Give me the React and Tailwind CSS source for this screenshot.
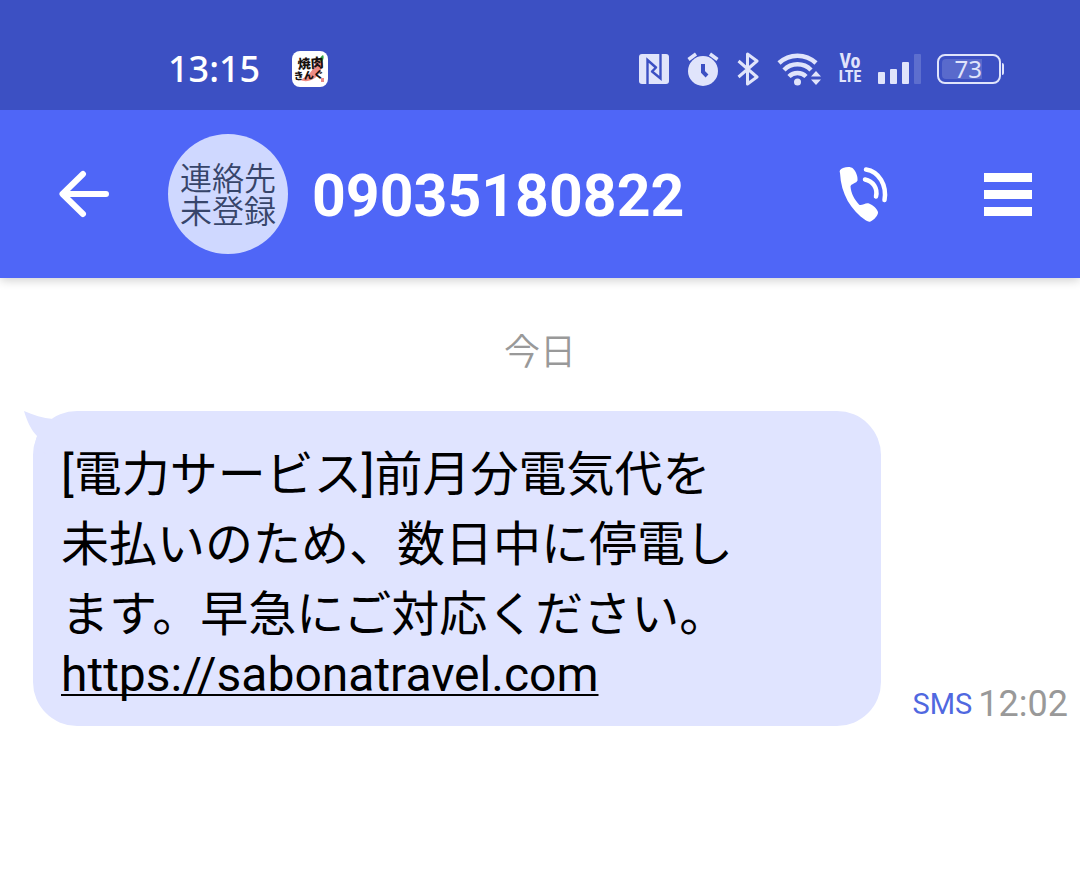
import React from 'react';

function AppBadge() {
  return (
    <svg width="36" height="36" viewBox="0 0 36 36" role="img" aria-label="焼肉きんぐ">
      <rect width="36" height="36" rx="8" fill="#fff" />
      <path d="M8 29c7 3 16 0 20-8 2-4 4-8 2-12-4-2-6 1-7 4-2 7-7 12-15 16z" fill="#ee8c84" />
      <path d="M27 9c1-2 2-4 4-5 1 1 1 4-1 7z" fill="#35a548" />
      <g fill="#15100f" fontFamily="'Noto Sans CJK JP', sans-serif" fontWeight="900">
        <text x="6" y="18" fontSize="13" transform="rotate(-4 6 18)">焼肉</text>
        <text x="2" y="29" fontSize="10" transform="rotate(-4 2 29)">きんぐ</text>
      </g>
      <rect x="29" y="27" width="3" height="4" fill="#e88a86" />
    </svg>
  );
}

function NfcIcon() {
  return (
    <svg width="30" height="30" viewBox="0 0 30 30" aria-hidden="true">
      <rect width="30" height="30" rx="3" fill="#e0e4fb" />
      <path d="M8.500 30V6l9 8M21.500 0v24.500l-9-7.500M17.500 13l-5 5" fill="none" stroke="#3c50c3" strokeWidth="2.400" />
    </svg>
  );
}

function AlarmIcon() {
  return (
    <svg width="32" height="34" viewBox="0 0 32 34" fill="none" aria-hidden="true">
      <circle cx="16" cy="19" r="15" fill="#e0e4fb" />
      <path d="M1.500 7.500 9 2M30.500 7.500 23 2" stroke="#e0e4fb" strokeWidth="3.500" />
      <path d="M16 12v8l4 4" stroke="#3c50c3" strokeWidth="4" />
    </svg>
  );
}

function BluetoothIcon() {
  return (
    <svg width="22" height="34" viewBox="0 0 22 34" fill="none" stroke="#e0e4fb" strokeWidth="3" strokeLinejoin="round" aria-hidden="true">
      <path d="M1.500 9 20 25l-9.500 7V2L20 9 1.500 25" />
    </svg>
  );
}

function WifiIcon() {
  return (
    <svg width="45" height="34" viewBox="0 0 45 34" fill="none" stroke="#e0e4fb" strokeWidth="4.500" aria-hidden="true">
      <path d="M2 11a27 27 0 0 1 37 0" />
      <path d="M7 18a19 19 0 0 1 27 0" />
      <path d="M12 24.500a12 12 0 0 1 17 0" />
      <circle cx="20.500" cy="30" r="3.500" fill="#e0e4fb" stroke="none" />
      <path d="m39 19 5 5.500H34zM39 33l-5-5.500h10z" fill="#e0e4fb" stroke="none" />
    </svg>
  );
}

function SignalIcon() {
  return (
    <svg width="43" height="32" viewBox="0 0 43 32" fill="#e0e4fb" aria-hidden="true">
      <rect x="0" y="19" width="7" height="12" rx="1" />
      <rect x="12" y="16" width="7" height="15" rx="1" />
      <rect x="24" y="9" width="7" height="22" rx="1" />
      <rect x="36" y="1" width="7" height="30" rx="1" opacity="0.2" />
    </svg>
  );
}

function BackIcon() {
  return (
    <svg width="50" height="48" viewBox="0 0 50 48" fill="none" stroke="#fff" strokeWidth="6" strokeLinecap="round" strokeLinejoin="round" aria-hidden="true">
      <path d="M24 4 3.500 24 24 44M4 24h43" />
    </svg>
  );
}

function PhoneIcon() {
  return (
    <svg width="50" height="56" viewBox="0 0 50 56" fill="none" aria-hidden="true">
      <path d="M1 7C0 5 1 3 4 2c4-1.500 8-1.500 10 .500 3 3 5 8 4.500 12-.500 2.500-7 3.500-7 6 .500 7 4 13 8.500 18 2 2 7-2.500 10-1 4 1.500 8 5 9 8.500.500 3-4 8-7.500 9.500-1.500.500-3 0-4.500-1C12 44.500 2 28 1 7z" fill="#fff" />
      <path d="M27 3.500C40 5.500 48 19 45.500 34M26 13.500c8 1.500 13 9 11 17" stroke="#fff" strokeWidth="4.500" strokeLinecap="round" />
    </svg>
  );
}

function StatusBar() {
  return (
    <div className="relative z-10 flex h-[110px] items-center justify-between bg-[#3c50c3] pt-7 pr-[76px] pl-[168px] text-[#e0e4fb]">
      <div className="flex items-center gap-8">
        <time className="font-['Noto_Sans',sans-serif] text-[36px] leading-10 font-medium text-white">13:15</time>
        <AppBadge />
      </div>
      <div className="flex items-center gap-4">
        <div className="flex items-center gap-[18px]">
          <NfcIcon />
          <AlarmIcon />
          <BluetoothIcon />
          <WifiIcon />
        </div>
        <div className="flex w-6 flex-col items-center font-['Roboto_Condensed','Liberation_Sans_Narrow',sans-serif] font-bold">
          <span className="text-[20px] leading-4">Vo</span>
          <span className="text-[16px] leading-4">LTE</span>
        </div>
        <SignalIcon />
        <div className="flex items-center gap-px">
          <div className="h-[30px] w-16 rounded-lg border-2 border-[#e0e4fb] p-[3px]">
            <div className="flex w-10 justify-end rounded-l bg-white/15 font-['Noto_Sans',sans-serif] text-[24px] leading-5">73</div>
          </div>
          <div className="h-3 w-0.5 rounded-r bg-[#e0e4fb]" />
        </div>
      </div>
    </div>
  );
}

function ChatHeader() {
  return (
    <header className="flex h-[168px] items-center bg-[#4f66f7] pr-12 pl-[59px] shadow-[0_2px_10px_rgba(0,0,0,0.2)]">
      <button type="button" aria-label="戻る">
        <BackIcon />
      </button>
      <div className="ml-[59px] flex size-[120px] shrink-0 items-center justify-center rounded-full bg-[#cfd8ff] pt-1 text-center text-[32px] leading-[33px] font-[350] text-[#37456a]">
        <span>
          連絡先
          <br />
          未登録
        </span>
      </div>
      <h1 className="ml-6 flex-1 pt-1 text-[59px] leading-[70px] font-bold text-white">09035180822</h1>
      <button type="button" aria-label="電話をかける">
        <PhoneIcon />
      </button>
      <button type="button" aria-label="メニュー" className="ml-[95px] flex w-12 flex-col gap-2">
        <span className="h-[9px] w-full bg-white" />
        <span className="h-[9px] w-full bg-white" />
        <span className="h-[9px] w-full bg-white" />
      </button>
    </header>
  );
}

function Message() {
  return (
    <div className="mt-8 flex items-end gap-8 pr-3 pl-[33px]">
      <div className="relative flex-1 rounded-[44px] bg-[#e0e4ff] px-7 pt-[29px] pb-[26px] text-[48px] text-black">
        <svg className="absolute top-0 -left-[9px]" width="44" height="44" viewBox="0 0 44 44" aria-hidden="true">
          <path d="M0 0c9 4 19 7 29 8L44 20 24 44 10 36 13 25C7 19 3 10 0 0z" fill="#e0e4ff" />
        </svg>
        <p className="relative max-w-[680px] leading-[70px]">[電力サービス]前月分電気代を未払いのため、数日中に停電します。早急にご対応ください。</p>
        <a href="https://sabonatravel.com" className="relative block leading-[50px] underline decoration-2 underline-offset-[3px] [text-decoration-skip-ink:none]">
          https://sabonatravel.com
        </a>
      </div>
      <div className="flex shrink-0 items-center gap-1.5 pb-0.5">
        <span className="text-[29px] leading-10 text-[#5068e0]">SMS</span>
        <time className="text-[36px] leading-10 text-[#999999]">12:02</time>
      </div>
    </div>
  );
}

export default function App() {
  return (
    <div className="min-h-screen bg-white font-['Roboto','Noto_Sans_CJK_JP',sans-serif]" lang="ja">
      <StatusBar />
      <ChatHeader />
      <main className="pt-12">
        <p className="pt-0.5 text-center text-[36px] leading-[51px] font-[350] text-[#999999]">今日</p>
        <Message />
      </main>
    </div>
  );
}
